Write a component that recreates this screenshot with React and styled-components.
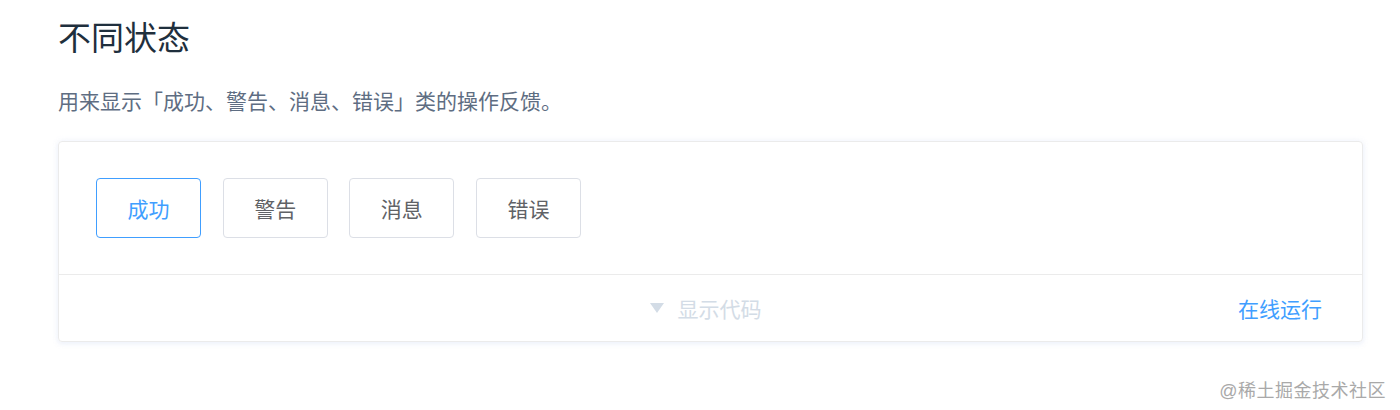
import React from 'react';
import styled, { createGlobalStyle } from 'styled-components';

const GlobalStyle = createGlobalStyle`
  html, body {
    margin: 0;
    padding: 0;
    background: #fff;
    font-family: "Liberation Sans", "Noto Sans CJK SC", sans-serif;
  }
`;

const Page = styled.div`
  position: relative;
  width: 1400px;
  height: 410px;
  box-sizing: border-box;
  padding: 14px 0 0 58px;
  overflow: hidden;
`;

const Title = styled.h3`
  margin: 0;
  font-size: 33px;
  font-weight: 400;
  line-height: 50px;
  color: #1f2f3d;
`;

const Desc = styled.p`
  margin: 22px 0 23px;
  font-size: 21px;
  line-height: 32px;
  color: #5e6d82;
`;

const Block = styled.div`
  width: 1305px;
  box-sizing: border-box;
  border: 1px solid #ebebeb;
  border-radius: 4px;
  box-shadow: 0 0 6px rgba(232, 237, 250, 0.6), 0 2px 4px rgba(232, 237, 250, 0.5);
`;

const Source = styled.div`
  display: flex;
  gap: 21.67px;
  padding: 36px 36px 36px 37px;
  border-bottom: 1px solid #ebebeb;
`;

const Button = styled.button`
  width: 105px;
  height: 60px;
  box-sizing: border-box;
  border-radius: 4px;
  background: #fff;
  font-family: inherit;
  font-size: 21px;
  border: 1px solid ${({ active }) => (active ? '#409eff' : '#dcdfe6')};
  color: ${({ active }) => (active ? '#409eff' : '#606266')};
  cursor: pointer;
`;

const Control = styled.div`
  position: relative;
  height: 66px;
  display: flex;
  align-items: center;
  justify-content: center;
`;

const Toggle = styled.div`
  display: flex;
  align-items: center;
  gap: 14px;
  margin-left: -10px;
  font-size: 21px;
  color: #d3dce6;
`;

const RunLink = styled.span`
  position: absolute;
  right: 40px;
  font-size: 21px;
  color: #409eff;
`;

const Watermark = styled.div`
  position: absolute;
  right: 14px;
  bottom: 8px;
  font-size: 18px;
  color: #a9a9a9;
  letter-spacing: 0.5px;
`;

const buttons = ['成功', '警告', '消息', '错误'];

export default function App() {
  return (
    <>
      <GlobalStyle />
      <Page>
        <Title>不同状态</Title>
        <Desc>用来显示「成功、警告、消息、错误」类的操作反馈。</Desc>
        <Block>
          <Source>
            {buttons.map((b, i) => (
              <Button key={b} active={i === 0 ? 1 : 0}>
                {b}
              </Button>
            ))}
          </Source>
          <Control>
            <Toggle>
              <svg width="14" height="10" viewBox="0 0 14 10">
                <path d="M0 0 L14 0 L7 10 Z" fill="#d3dce6" />
              </svg>
              <span>显示代码</span>
            </Toggle>
            <RunLink>在线运行</RunLink>
          </Control>
        </Block>
        <Watermark>@稀土掘金技术社区</Watermark>
      </Page>
    </>
  );
}
